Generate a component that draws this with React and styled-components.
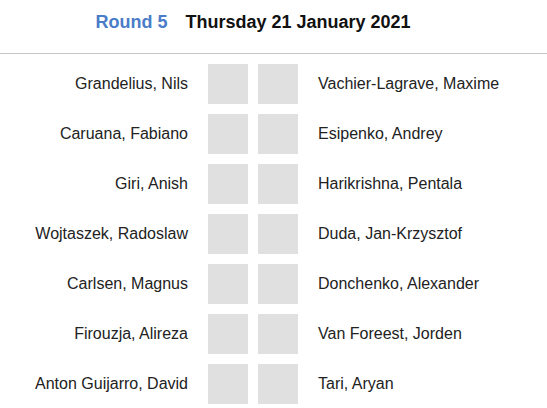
import styled, { createGlobalStyle } from "styled-components"

const Global = createGlobalStyle`
  body {
    margin: 0;
    background: #fff;
    font-family: "Liberation Sans", Arial, sans-serif;
  }
`

const Header = styled.div`
  border-bottom: 1px solid #c6c6c6;
  padding: 12px 0 20px;
`
const Title = styled.div`
  width: 506px;
  display: flex;
  justify-content: center;
  gap: 18px;
  font-size: 18px;
  line-height: 21px;
  font-weight: bold;
`
const Round = styled.span`
  color: #4a7cc9;
`
const Date = styled.span`
  color: #111;
`
const Table = styled.div`
  width: 506px;
  display: flex;
  flex-direction: column;
  gap: 10px;
  padding-top: 10px;
`
const Row = styled.div`
  display: flex;
  align-items: center;
  gap: 20px;
`
const Name = styled.div`
  width: 188px;
  font-size: 16px;
  color: #222;
  white-space: nowrap;
  text-align: ${p => p.align};
`
const Scores = styled.div`
  display: flex;
  gap: 10px;
`
const Box = styled.div`
  width: 40px;
  height: 40px;
  background: #e0e0e0;
`

const pairings = [
  ["Grandelius, Nils", "Vachier-Lagrave, Maxime"],
  ["Caruana, Fabiano", "Esipenko, Andrey"],
  ["Giri, Anish", "Harikrishna, Pentala"],
  ["Wojtaszek, Radoslaw", "Duda, Jan-Krzysztof"],
  ["Carlsen, Magnus", "Donchenko, Alexander"],
  ["Firouzja, Alireza", "Van Foreest, Jorden"],
  ["Anton Guijarro, David", "Tari, Aryan"],
]

const App = () => {
  return (
    <>
      <Global />
      <Header>
        <Title>
          <Round>Round 5</Round>
          <Date>Thursday 21 January 2021</Date>
        </Title>
      </Header>
      <Table>
        {pairings.map(([white, black]) => (
          <Row key={white}>
            <Name align="right">{white}</Name>
            <Scores>
              <Box />
              <Box />
            </Scores>
            <Name align="left">{black}</Name>
          </Row>
        ))}
      </Table>
    </>
  )
}

export default App
